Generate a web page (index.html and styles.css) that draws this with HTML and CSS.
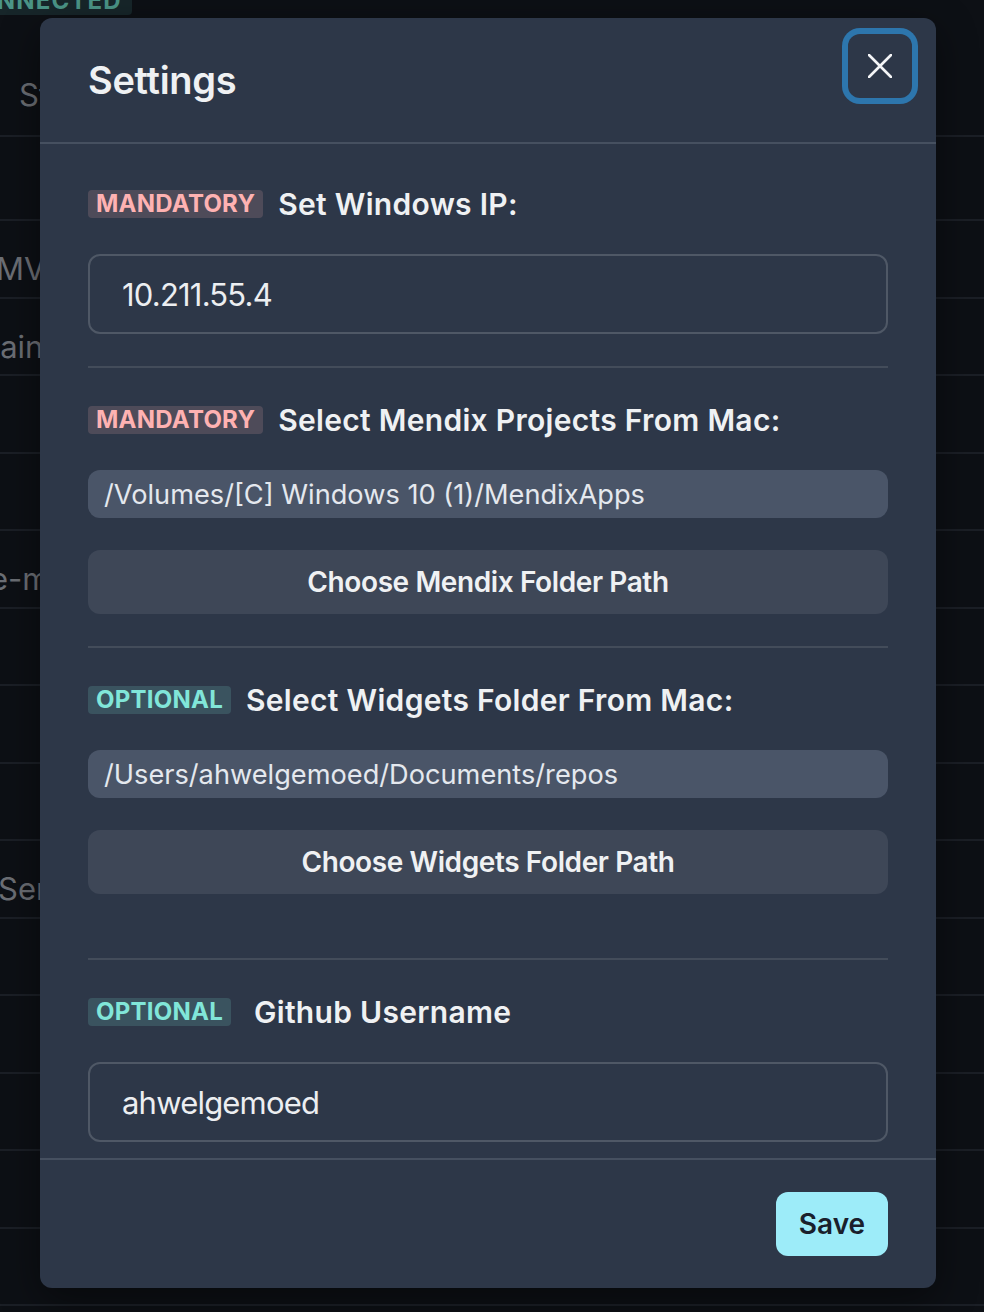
FILE: index.html
```html
<!DOCTYPE html>
<html lang="en">
<head>
<meta charset="utf-8">
<title>Settings</title>
<link rel="stylesheet" href="styles.css">
</head>
<body>
<div class="page">
  <div class="page-top">
    <span class="status-badge">CONNECTED</span>
    <span class="row-text shift-s">Status</span>
  </div>
  <div class="row row-first"></div>
  <div class="row"><span class="row-text shift-mv">MVP app</span></div>
  <div class="row"><span class="row-text shift-main">main</span></div>
  <div class="row"></div>
  <div class="row"></div>
  <div class="row"><span class="row-text shift-em">one-more</span></div>
  <div class="row"></div>
  <div class="row"></div>
  <div class="row"></div>
  <div class="row"><span class="row-text shift-ser">Server</span></div>
  <div class="row"></div>
  <div class="row"></div>
  <div class="row"></div>
  <div class="row"></div>
  <div class="row"></div>
</div>

<section class="modal" role="dialog" aria-label="Settings">
  <header class="modal-header">
    <h2 class="modal-title">Settings</h2>
  </header>
  <button class="close-btn" aria-label="Close">
    <svg width="24" height="24" viewBox="0 0 24 24" aria-hidden="true">
      <path d="M1 1 L23 23 M23 1 L1 23" stroke="#f4f5f7" stroke-width="2.6" stroke-linecap="round" fill="none"/>
    </svg>
  </button>

  <div class="modal-body">
    <div class="field">
      <div class="field-label">
        <span class="badge badge-red">Mandatory</span>
        <span class="label-text">Set Windows IP:</span>
      </div>
      <div class="text-input">10.211.55.4</div>
    </div>

    <div class="rule"></div>

    <div class="field">
      <div class="field-label">
        <span class="badge badge-red">Mandatory</span>
        <span class="label-text">Select Mendix Projects From Mac:</span>
      </div>
      <div class="path-box">/Volumes/[C] Windows 10 (1)/MendixApps</div>
      <button class="ghost-btn">Choose Mendix Folder Path</button>
    </div>

    <div class="rule"></div>

    <div class="field">
      <div class="field-label">
        <span class="badge badge-teal">Optional</span>
        <span class="label-text">Select Widgets Folder From Mac:</span>
      </div>
      <div class="path-box">/Users/ahwelgemoed/Documents/repos</div>
      <button class="ghost-btn">Choose Widgets Folder Path</button>
    </div>

    <div class="rule rule-spaced"></div>

    <div class="field">
      <div class="field-label field-label-wide">
        <span class="badge badge-teal">Optional</span>
        <span class="label-text">Github Username</span>
      </div>
      <div class="text-input">ahwelgemoed</div>
    </div>
  </div>

  <footer class="modal-footer">
    <button class="save-btn">Save</button>
  </footer>
</section>
</body>
</html>
```

FILE: styles.css
```css
* { box-sizing: border-box; }

html, body {
  margin: 0;
  padding: 0;
  width: 984px;
  height: 1312px;
  overflow: hidden;
  background: #0d1015;
  font-family: Inter, "Noto Sans", "Liberation Sans", sans-serif;
}

/* ---------- dimmed page behind the dialog ---------- */
.page {
  display: flex;
  flex-direction: column;
  width: 984px;
}

.page-top {
  height: 137px;
  border-bottom: 2px solid #1b1f26;
  display: flex;
  flex-direction: column;
  align-items: flex-start;
}

.status-badge {
  margin-top: -14px;
  margin-left: -52px;
  padding: 0 10px;
  height: 29px;
  line-height: 29px;
  font-size: 24px;
  font-weight: 700;
  letter-spacing: 0.05em;
  color: #4b9587;
  background: #17262a;
  border-radius: 4px;
}

.row {
  height: 77.5px;
  border-bottom: 2px solid #1b1f26;
  display: flex;
  align-items: center;
  padding-top: 20px;
}

.row-first { height: 84px; }

.row-text {
  font-size: 31px;
  color: #6c6f75;
  white-space: nowrap;
  line-height: 1;
}

.shift-s { margin-top: 64px; margin-left: 19px; }
.shift-mv { margin-left: -4px; }
.shift-main { margin-left: -27px; }
.shift-em { margin-left: -47px; }
.shift-ser { margin-left: -2px; }

/* ---------- dialog ---------- */
.modal {
  position: absolute;
  top: 18px;
  left: 40px;
  width: 896px;
  height: 1270px;
  background: #2d3748;
  border-radius: 12px;
  box-shadow: 0 12px 40px rgba(0, 0, 0, 0.45);
  display: flex;
  flex-direction: column;
}

.modal-header {
  padding: 32px 48px;
  border-bottom: 2px solid #465060;
}

.modal-title {
  margin: 0;
  font-size: 38px;
  line-height: 60px;
  letter-spacing: -0.3px;
  font-weight: 600;
  color: #eff1f3;
}

.close-btn {
  position: absolute;
  top: 16px;
  right: 24px;
  width: 64px;
  height: 64px;
  border: 0;
  padding: 0;
  border-radius: 12px;
  background: transparent;
  box-shadow: 0 0 0 6px #2d76ad;
  display: flex;
  align-items: center;
  justify-content: center;
}

.modal-body {
  padding: 40px 48px 16px;
  display: flex;
  flex-direction: column;
}

.field {
  display: flex;
  flex-direction: column;
}

.field-label {
  height: 40px;
  display: flex;
  align-items: center;
  gap: 15px;
  margin-bottom: 30px;
}

.field-label-wide { gap: 23px; }

.badge {
  height: 28px;
  line-height: 28px;
  padding: 0 8px;
  border-radius: 4px;
  font-size: 24px;
  font-weight: 700;
  letter-spacing: 0.01em;
  text-transform: uppercase;
}

.badge-red {
  color: #feb2b2;
  background: rgba(254, 178, 178, 0.16);
}

.badge-teal {
  color: #81e6d9;
  background: rgba(129, 230, 217, 0.16);
}

.label-text {
  font-size: 30px;
  font-weight: 600;
  letter-spacing: 0.3px;
  color: #eff1f3;
  white-space: nowrap;
}

.text-input {
  height: 80px;
  border: 2px solid #4f5866;
  border-radius: 12px;
  padding: 0 32px;
  display: flex;
  align-items: center;
  font-size: 31px;
  letter-spacing: -0.8px;
  color: #eceef1;
}

.path-box {
  height: 48px;
  border-radius: 12px;
  background: #4a5568;
  padding: 0 16px;
  display: flex;
  align-items: center;
  font-size: 27.2px;
  color: #e4e8ee;
  margin-bottom: 32px;
}

.ghost-btn {
  height: 64px;
  border: 0;
  border-radius: 12px;
  background: #3e4757;
  font-family: inherit;
  font-size: 28px;
  letter-spacing: -0.4px;
  font-weight: 600;
  color: #eff1f3;
}

.rule {
  height: 2px;
  background: #434c5a;
  margin: 32px 0;
}

.rule-spaced { margin-top: 64px; }

.modal-footer {
  border-top: 2px solid #465060;
  padding: 32px 48px;
  display: flex;
  justify-content: flex-end;
}

.save-btn {
  height: 64px;
  width: 112px;
  padding: 0;
  border: 0;
  border-radius: 12px;
  background: #9decf9;
  color: #1a202c;
  font-family: inherit;
  font-size: 28px;
  font-weight: 600;
}
```
